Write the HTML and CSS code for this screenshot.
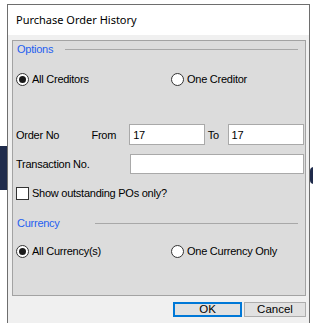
FILE: index.html
```html
<!doctype html>
<html>
  <head>
    <meta charset="utf-8" />
    <title>Purchase Order History</title>
    <meta name="viewport" content="width=device-width" />
    <link rel="stylesheet" href="styles.css">
  </head>

  <body>
    <div class="backdrop left"></div>
    <div class="backdrop right"></div>

    <div class="window">
      <div class="title">Purchase Order History</div>

      <div class="panel">
        <div class="legend">
          <span class="legend-text options">Options</span>
          <span class="rule"></span>
        </div>
        <div class="radios first">
          <label class="radio checked"><span class="dot"></span>All Creditors</label>
          <label class="radio"><span class="dot"></span>One Creditor</label>
        </div>

        <div class="row order">
          <span class="lbl">Order No</span>
          <span class="from">From</span>
          <span class="field short">17</span>
          <span class="to">To</span>
          <span class="field short end">17</span>
        </div>
        <div class="row trans">
          <span class="lbl wide">Transaction No.</span>
          <span class="field long"></span>
        </div>

        <label class="check"><span class="box"></span>Show outstanding POs only?</label>

        <div class="legend second">
          <span class="legend-text currency">Currency</span>
          <span class="rule"></span>
        </div>
        <div class="radios last">
          <label class="radio checked"><span class="dot"></span>All Currency(s)</label>
          <label class="radio"><span class="dot"></span>One Currency Only</label>
        </div>
      </div>

      <div class="buttons">
        <button class="btn ok">OK</button>
        <button class="btn">Cancel</button>
      </div>
    </div>
  </body>
</html>
```

FILE: styles.css
```css
body {
  margin: 0;
  padding: 4px 3px 0 7px;
  background: #fff;
  font-family: "Liberation Sans", Arial, sans-serif;
  font-size: 11px;
  letter-spacing: -0.25px;
  color: #000;
  overflow: hidden;
}
.backdrop {
  position: absolute;
  background: #1f2b4b;
}
.backdrop.left {
  left: 0;
  top: 146px;
  width: 7px;
  height: 44px;
}
.backdrop.right {
  left: 310px;
  top: 167px;
  width: 6px;
  height: 17px;
  border-radius: 4px 0 0 4px;
}
.window {
  position: relative;
  border: 1px solid #6e6e6e;
  border-bottom: none;
  background: #f0f0f0;
  height: 330px;
}
.title {
  background: #fff;
  height: 30px;
  line-height: 30px;
  padding-left: 8px;
  font-family: "Noto Sans", "Open Sans", sans-serif;
  font-size: 11px;
  letter-spacing: 0;
}
.panel {
  margin: 5px 3px 0 4px;
  border: 1px solid #a3a3a3;
  background: #dcdcdc;
  padding: 0 1px 36px 3px;
}
.legend {
  display: flex;
  align-items: center;
  height: 16px;
  padding-left: 1px;
  padding-right: 6px;
  color: #1f5ff0;
}
.legend.second {
  margin-top: 14px;
}
.legend-text.options {
  width: 48px;
}
.legend-text.currency {
  width: 78px;
}
.rule {
  flex: 1;
  height: 1px;
  background: #a8a8a8;
}
.radios {
  display: grid;
  grid-template-columns: 155px 1fr;
  height: 16px;
  align-items: center;
}
.radios.first {
  margin-top: 14px;
}
.radios.last {
  margin-top: 12px;
}
.radio, .check {
  display: flex;
  align-items: center;
  white-space: nowrap;
}
.dot {
  width: 11px;
  height: 11px;
  border: 1px solid #333;
  border-radius: 50%;
  background: #fff;
  margin-right: 3px;
  display: flex;
  align-items: center;
  justify-content: center;
}
.checked .dot::after {
  content: "";
  width: 7px;
  height: 7px;
  border-radius: 50%;
  background: #1a1a1a;
}
.row {
  display: flex;
  align-items: center;
}
.row.order {
  margin-top: 37px;
  height: 21px;
}
.row.trans {
  margin-top: 9px;
  height: 20px;
}
.lbl {
  width: 76px;
}
.lbl.wide {
  width: 114px;
}
.from {
  width: 38px;
}
.to {
  width: 20px;
  padding-left: 3px;
}
.field {
  box-sizing: border-box;
  height: 100%;
  background: #fff;
  border: 1px solid #a9a9a9;
  padding-left: 3px;
  display: flex;
  align-items: center;
}
.field.short {
  width: 76px;
}
.field.end {
  width: 77px;
}
.field.long {
  flex: 1;
}
.check {
  margin-top: 11px;
  height: 16px;
}
.box {
  width: 11px;
  height: 11px;
  border: 1px solid #333;
  background: #fff;
  margin-right: 3px;
}
.buttons {
  display: flex;
  justify-content: flex-end;
  gap: 2px;
  margin: 6px 3px 0 0;
}
.btn {
  font-family: inherit;
  font-size: 11.5px;
  height: 15px;
  padding: 0;
  line-height: 1;
  background: #e1e1e1;
  border: 1px solid #adadad;
  width: 62px;
}
.btn.ok {
  width: 69px;
  border: 2px solid #0078d7;
}
```
